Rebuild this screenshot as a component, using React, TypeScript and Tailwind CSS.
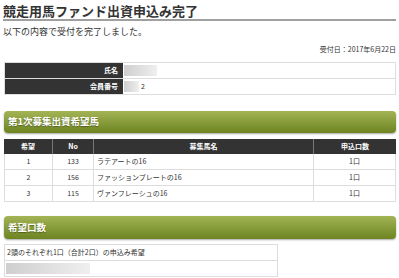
import React from 'react';

const horses = [
  { rank: '1', no: '133', name: 'ラテアートの16', units: '1口' },
  { rank: '2', no: '156', name: 'ファッションプレートの16', units: '1口' },
  { rank: '3', no: '115', name: 'ヴァンフレーシュの16', units: '1口' },
];

function SectionHeader({ title, tall }: { title: string; tall?: boolean }) {
  return (
    <div
      className={`${tall ? 'h-[23px]' : 'h-[22px]'} flex items-center pl-[4px] rounded-[4px] bg-gradient-to-b from-[#a3b455] to-[#6d8420] shadow-[0_1px_2px_rgba(0,0,0,0.35)]`}
    >
      <span className="text-white font-bold text-[9.5px] leading-none [text-shadow:0_1px_1px_rgba(0,0,0,0.35)]">
        {title}
      </span>
    </div>
  );
}

function Blur({ w }: { w: string }) {
  return <span className={`inline-block ${w} h-[11px] bg-gradient-to-r from-[#cfcfcf] to-[#efefef] blur-[0.5px]`} />;
}

export default function App() {
  return (
    <div className="w-[399px] h-[278px] overflow-hidden bg-white pl-[4px] pr-[3px] text-[#333] font-['Noto_Sans_CJK_JP','Noto_Sans',sans-serif]">
      <h1 className="pt-[2px] -ml-[1px] text-[13px] leading-[17px] font-bold border-b-2 border-[#a0a0a0]">
        競走用馬ファンド出資申込み完了
      </h1>
      <p className="mt-[5px] -ml-[1px] text-[9px] leading-[12px]">以下の内容で受付を完了しました。</p>
      <p className="mt-[6px] text-right text-[7px] leading-[10px]">受付日：2017年6月22日</p>

      <div className="mt-[8px] border border-[#ddd] text-[7px]">
        <div className="flex h-[16px] border-b border-[#ddd]">
          <div className="w-[118px] bg-[#333] text-white font-bold flex items-center justify-end pr-[5px]">氏名</div>
          <div className="flex-1 flex items-center pl-[1px]">
            <Blur w="w-[33px]" />
          </div>
        </div>
        <div className="flex h-[15px]">
          <div className="w-[118px] bg-[#333] text-white font-bold flex items-center justify-end pr-[5px]">会員番号</div>
          <div className="flex-1 flex items-center pl-[1px] gap-[2px]">
            <Blur w="w-[15px]" />
            <span>2</span>
          </div>
        </div>
      </div>

      <div className="mt-[16px]">
        <SectionHeader title="第1次募集出資希望馬" />
      </div>

      <div className="mt-[6px] text-[7px]">
        <div className="flex h-[15px] bg-[#333] text-white font-bold">
          <div className="w-[49px] flex items-center justify-center border-r border-[#777]">希望</div>
          <div className="w-[41px] flex items-center justify-center border-r border-[#777]">No</div>
          <div className="w-[220px] flex items-center justify-center border-r border-[#777]">募集馬名</div>
          <div className="flex-1 flex items-center justify-center">申込口数</div>
        </div>
        {horses.map((h) => (
          <div key={h.rank} className="flex h-[16px] border-b border-x border-[#ddd]">
            <div className="w-[48px] flex items-center justify-center border-r border-[#ddd]">{h.rank}</div>
            <div className="w-[41px] flex items-center justify-center border-r border-[#ddd]">{h.no}</div>
            <div className="w-[220px] flex items-center pl-[3px] border-r border-[#ddd]">{h.name}</div>
            <div className="flex-1 flex items-center justify-center">{h.units}</div>
          </div>
        ))}
      </div>

      <div className="mt-[14px]">
        <SectionHeader title="希望口数" tall />
      </div>

      <div className="mt-[5px] w-[274px] border border-[#ddd] text-[7px]">
        <div className="h-[16px] flex items-center pl-[2px] border-b border-[#ddd]">
          2頭のそれぞれ1口（合計2口）の申込み希望
        </div>
        <div className="h-[15px] flex items-center pl-[1px]">
          <Blur w="w-[84px]" />
        </div>
      </div>
    </div>
  );
}
